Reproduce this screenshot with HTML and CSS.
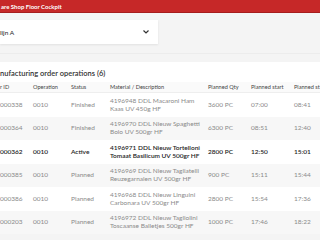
FILE: index.html
```html
<!DOCTYPE html>
<html lang="en">
<head>
    <meta charset="UTF-8">
    <meta name="viewport" content="width=device-width, initial-scale=1.0">
    <title>Shop Floor Cockpit</title>
    <link rel="stylesheet" href="styles.css">
</head>
<body>
    <header class="topbar">
        <span class="app-title">are Shop Floor Cockpit</span>
    </header>

    <div class="filter">
        <div class="select">
            <span>lijn A</span>
            <svg class="chevron" width="6" height="4" viewBox="0 0 6 4">
                <path d="M0.5 0.5 L3 3 L5.5 0.5" fill="none" stroke="#333" stroke-width="1.2"/>
            </svg>
        </div>
    </div>

    <section class="card">
        <h2 class="card-title">nufacturing order operations (6)</h2>
        <div class="table">
            <div class="row head">
                <div>r ID</div>
                <div>Operation</div>
                <div>Status</div>
                <div>Material / Description</div>
                <div>Planned Qty</div>
                <div>Planned start</div>
                <div>Planned st</div>
            </div>
            <div class="row">
                <div>000338</div>
                <div>0010</div>
                <div>Finished</div>
                <div class="desc">4196948 DDL Macaroni Ham<br>Kaas UV 450g HF</div>
                <div>3600 PC</div>
                <div>07:00</div>
                <div>08:41</div>
            </div>
            <div class="row">
                <div>000364</div>
                <div>0010</div>
                <div>Finished</div>
                <div class="desc">4196970 DDL Nieuw Spaghetti<br>Bolo UV 500gr HF</div>
                <div>6300 PC</div>
                <div>08:51</div>
                <div>12:40</div>
            </div>
            <div class="row active">
                <div>000362</div>
                <div>0010</div>
                <div>Active</div>
                <div class="desc">4196971 DDL Nieuw Tortelloni<br>Tomaat Basilicum UV 500gr HF</div>
                <div>2800 PC</div>
                <div>12:50</div>
                <div>15:01</div>
            </div>
            <div class="row">
                <div>000385</div>
                <div>0010</div>
                <div>Planned</div>
                <div class="desc">4196969 DDL Nieuw Tagliatelli<br>Reuzegarnalen UV 500gr HF</div>
                <div>900 PC</div>
                <div>15:11</div>
                <div>15:44</div>
            </div>
            <div class="row">
                <div>000386</div>
                <div>0010</div>
                <div>Planned</div>
                <div class="desc">4196968 DDL Nieuw Linguini<br>Carbonara UV 500gr HF</div>
                <div>2800 PC</div>
                <div>15:54</div>
                <div>17:36</div>
            </div>
            <div class="row">
                <div>000203</div>
                <div>0010</div>
                <div>Planned</div>
                <div class="desc">4196972 DDL Nieuw Tagliolini<br>Toscaanse Balletjes 500gr HF</div>
                <div>1000 PC</div>
                <div>17:46</div>
                <div>18:22</div>
            </div>
        </div>
    </section>
</body>
</html>
```

FILE: styles.css
```css
body {
    margin: 0;
    background-color: #f4f4f4;
    font-family: Lato, 'Open Sans', sans-serif;
    color: #333;
    overflow: hidden;
}

.topbar {
    height: 12px;
    background-color: #c62828;
    border-bottom: 1px solid #a51e1e;
    display: flex;
    align-items: center;
}

.app-title {
    color: #fff;
    font-size: 6px;
    font-weight: bold;
    padding-left: 1px;
}

.filter {
    padding: 7px 0 0 0;
    height: 33px;
    border-bottom: 1px solid #ececec;
}

.select {
    width: 158px;
    height: 24px;
    background-color: #fff;
    box-shadow: 0 1px 2px rgba(0, 0, 0, 0.08);
    display: flex;
    align-items: center;
    justify-content: space-between;
    font-size: 6.5px;
    color: #222;
    box-sizing: border-box;
    padding: 0 9px 0 0;
}

.card {
    margin-top: 8px;
    background-color: #fff;
    padding-top: 7px;
}

.card-title {
    margin: 0;
    font-size: 7.5px;
    font-weight: 600;
    color: #333;
    height: 13px;
    line-height: 10px;
}

.table {
    display: flex;
    flex-direction: column;
}

.row {
    display: grid;
    grid-template-columns: 33px 38px 39px 98px 43px 43px 1fr;
    align-items: center;
    height: 23.5px;
    font-size: 6.5px;
    color: #8a8a8a;
    line-height: 8px;
}

.desc {
    white-space: nowrap;
}

.row:nth-child(odd) {
    background-color: #f7f7f7;
}

.row.head {
    height: 10px;
    font-size: 5.6px;
    color: #444;
    background-color: #fafafa;
    border-bottom: 1px solid #eee;
}

.row.active {
    color: #222;
    font-weight: 600;
}
```
